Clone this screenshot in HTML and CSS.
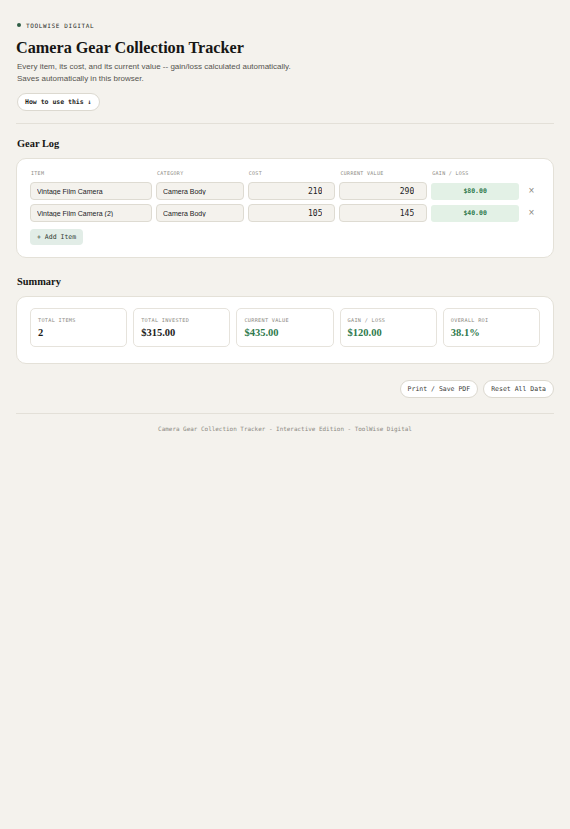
FILE: index.html
```html
<!DOCTYPE html>
<html lang="en">
<head>
<meta charset="utf-8">
<title>Camera Gear Collection Tracker</title>
<link rel="stylesheet" href="styles.css">
</head>
<body>
<main class="page">
  <header class="hero">
    <div class="brand"><span class="brand-dot"></span>TOOLWISE DIGITAL</div>
    <h1 class="title">Camera Gear Collection Tracker</h1>
    <p class="lede">Every item, its cost, and its current value -- gain/loss calculated automatically.<br>Saves automatically in this browser.</p>
    <button class="pill pill-strong" type="button">How to use this ↓</button>
  </header>

  <hr class="rule">

  <section class="section">
    <h2 class="section-title">Gear Log</h2>
    <div class="card">
      <div class="log-grid">
        <div class="col-label">ITEM</div>
        <div class="col-label">CATEGORY</div>
        <div class="col-label">COST</div>
        <div class="col-label">CURRENT VALUE</div>
        <div class="col-label">GAIN / LOSS</div>
        <div></div>

        <input class="field" value="Vintage Film Camera">
        <input class="field" value="Camera Body">
        <input class="field num" value="210">
        <input class="field num" value="290">
        <div class="gain">$80.00</div>
        <button class="remove" type="button">×</button>

        <input class="field" value="Vintage Film Camera (2)">
        <input class="field" value="Camera Body">
        <input class="field num" value="105">
        <input class="field num" value="145">
        <div class="gain">$40.00</div>
        <button class="remove" type="button">×</button>
      </div>
      <button class="add-btn" type="button">+ Add Item</button>
    </div>
  </section>

  <section class="section">
    <h2 class="section-title">Summary</h2>
    <div class="card card-summary">
      <div class="stats">
        <div class="stat"><div class="stat-label">TOTAL ITEMS</div><div class="stat-value">2</div></div>
        <div class="stat"><div class="stat-label">TOTAL INVESTED</div><div class="stat-value">$315.00</div></div>
        <div class="stat"><div class="stat-label">CURRENT VALUE</div><div class="stat-value good">$435.00</div></div>
        <div class="stat"><div class="stat-label">GAIN / LOSS</div><div class="stat-value good">$120.00</div></div>
        <div class="stat"><div class="stat-label">OVERALL ROI</div><div class="stat-value good">38.1%</div></div>
      </div>
    </div>
  </section>

  <div class="actions">
    <button class="pill" type="button">Print / Save PDF</button>
    <button class="pill" type="button">Reset All Data</button>
  </div>

  <hr class="rule rule-foot">
  <footer class="foot">Camera Gear Collection Tracker - Interactive Edition - ToolWise Digital</footer>
</main>
</body>
</html>
```

FILE: styles.css
```css
* { box-sizing: border-box; }

html, body {
  margin: 0;
  background: #f4f2ed;
}

body {
  color: #1c1c1a;
  font-family: "Liberation Sans", Arial, sans-serif;
}

.page {
  padding: 21px 16px 40px 16px;
}

/* header */
.brand {
  display: flex;
  align-items: center;
  gap: 5px;
  height: 8px;
  font-family: "DejaVu Sans Mono", monospace;
  font-size: 6px;
  letter-spacing: 0.65px;
  color: #2b2b28;
  padding-left: 1px;
}

.brand-dot {
  width: 4px;
  height: 4px;
  border-radius: 50%;
  background: #2e5e45;
}

.title {
  margin: 9px 0 0 0;
  font-family: "Liberation Serif", "Times New Roman", serif;
  font-weight: 700;
  font-size: 16.2px;
  line-height: 20px;
  color: #161614;
}

.lede {
  margin: 3px 0 0 1px;
  font-size: 8px;
  line-height: 12px;
  color: #55544f;
}

.pill {
  display: inline-flex;
  align-items: center;
  height: 18px;
  padding: 0 7px;
  border: 1px solid #dcd9d0;
  border-radius: 9px;
  background: #fff;
  font-family: "DejaVu Sans Mono", monospace;
  font-size: 6.5px;
  color: #3a3a36;
  cursor: pointer;
}

.pill-strong {
  margin-top: 8px;
  margin-left: 1px;
  font-weight: 700;
  color: #1e1e1c;
}

.rule {
  border: 0;
  height: 1px;
  background: #e3e0d8;
  margin: 12px 0 0 0;
}

/* sections */
.section {
  margin-top: 13px;
}

.section + .section {
  margin-top: 17px;
}

.section-title {
  margin: 0 0 7px 1px;
  font-family: "Liberation Serif", "Times New Roman", serif;
  font-weight: 700;
  font-size: 10.4px;
  line-height: 14px;
  color: #161614;
}

.card {
  background: #fff;
  border: 1.5px solid #e4e1d8;
  border-radius: 10px;
  padding: 8px 13px 12px 13px;
}

/* gear log */
.log-grid {
  display: grid;
  grid-template-columns: 1.39fr 1fr 1fr 1fr 1fr 17px;
  column-gap: 4px;
  row-gap: 4px;
  align-items: center;
}

.col-label {
  font-family: "DejaVu Sans Mono", monospace;
  font-size: 5px;
  letter-spacing: 0.3px;
  color: #8c8a83;
  padding: 3px 0 2px 1px;
}

.field {
  width: 100%;
  min-width: 0;
  height: 18px;
  padding: 0 6px;
  border: 1px solid #dedbd2;
  border-radius: 4px;
  background: #f4f2ed;
  font-family: "Liberation Sans", Arial, sans-serif;
  font-size: 7px;
  color: #22221f;
  outline: none;
}

.field.num {
  text-align: right;
  padding-right: 12px;
  font-family: "DejaVu Sans Mono", monospace;
  font-size: 8px;
}

.gain {
  height: 17px;
  display: flex;
  align-items: center;
  justify-content: center;
  border-radius: 3px;
  background: #e3f1e6;
  font-family: "DejaVu Sans Mono", monospace;
  font-weight: 700;
  font-size: 6.5px;
  color: #2f7a4d;
}

.remove {
  border: 0;
  background: none;
  padding: 0;
  font-size: 10px;
  line-height: 1;
  color: #8c8a83;
  text-align: center;
  cursor: pointer;
}

.add-btn {
  margin-top: 7px;
  height: 16px;
  padding: 0 7px;
  border: 0;
  border-radius: 4px;
  background: #e2ede7;
  font-family: "DejaVu Sans Mono", monospace;
  font-size: 6.5px;
  color: #2f3a33;
  cursor: pointer;
}

/* summary */
.card-summary {
  padding: 11px 13px 16px 13px;
}

.stats {
  display: grid;
  grid-template-columns: repeat(5, 1fr);
  gap: 6px;
}

.stat {
  height: 39px;
  border: 1px solid #e6e3dc;
  border-radius: 5px;
  padding: 8px 7px 0 7px;
}

.stat-label {
  font-family: "DejaVu Sans Mono", monospace;
  font-size: 5.2px;
  letter-spacing: 0.3px;
  color: #8c8a83;
}

.stat-value {
  margin-top: 4px;
  font-family: "Liberation Serif", "Times New Roman", serif;
  font-weight: 700;
  font-size: 10.5px;
  color: #1c1c1a;
}

.stat-value.good {
  color: #2f7a4d;
}

/* footer */
.actions {
  display: flex;
  justify-content: flex-end;
  gap: 5px;
  margin-top: 16px;
}

.rule-foot {
  margin-top: 15px;
}

.foot {
  margin-top: 11px;
  text-align: center;
  font-family: "DejaVu Sans Mono", monospace;
  font-size: 5.95px;
  color: #8c8a83;
}
```
